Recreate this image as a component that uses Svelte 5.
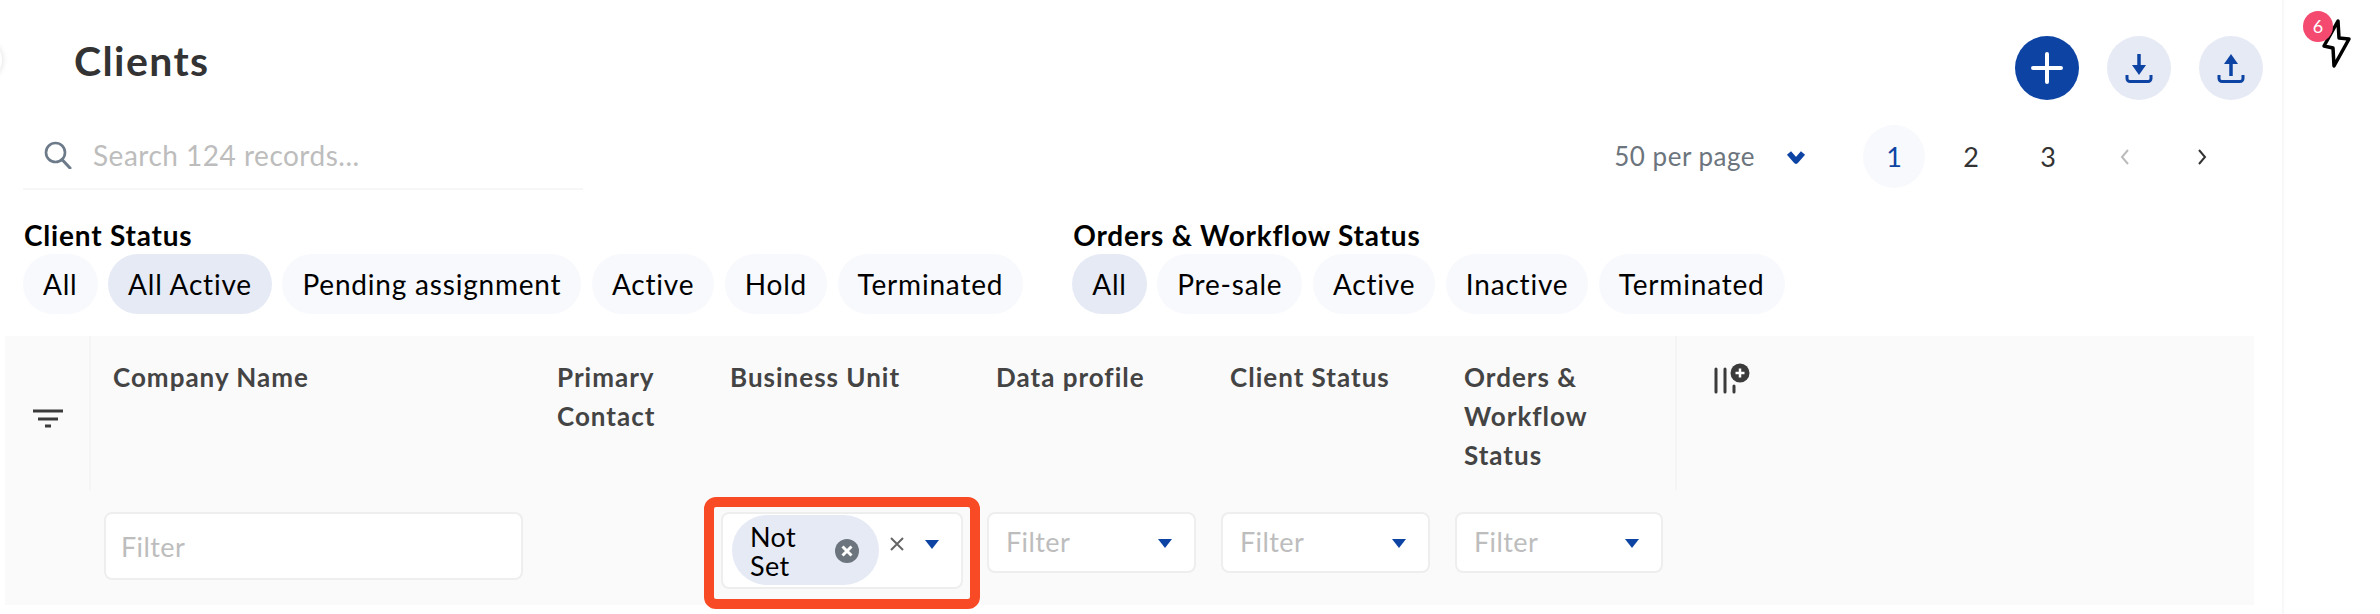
<script>
  const clientStatus = [
    { label: "All" },
    { label: "All Active", active: true },
    { label: "Pending assignment" },
    { label: "Active" },
    { label: "Hold" },
    { label: "Terminated" },
  ];
  const workflowStatus = [
    { label: "All", active: true },
    { label: "Pre-sale" },
    { label: "Active" },
    { label: "Inactive" },
    { label: "Terminated" },
  ];
  const selectFilters = [1, 2, 3];
</script>

<div class="page">
  <span class="edge-circle"></span>
  <main class="main">
    <header class="top">
      <h1>Clients</h1>
      <div class="actions">
        <button class="round primary" aria-label="Add">
          <svg width="64" height="64" viewBox="0 0 64 64">
            <path d="M32 18v28M18 32h28" stroke="#fff" stroke-width="4" stroke-linecap="round" />
          </svg>
        </button>
        <button class="round" aria-label="Download">
          <svg width="64" height="64" viewBox="0 0 64 64">
            <path d="M32 18v13" stroke="#0d44a3" stroke-width="3.5" />
            <path d="M25 29h14l-7 10z" fill="#0d44a3" />
            <path d="M20 39v3.500a3 3 0 0 0 3 3h18a3 3 0 0 0 3-3V39" fill="none" stroke="#0d44a3" stroke-width="3" />
          </svg>
        </button>
        <button class="round" aria-label="Upload">
          <svg width="64" height="64" viewBox="0 0 64 64">
            <path d="M32 26v14" stroke="#0d44a3" stroke-width="3.500" />
            <path d="M25 28h14l-7-10z" fill="#0d44a3" />
            <path d="M20 39v3.500a3 3 0 0 0 3 3h18a3 3 0 0 0 3-3V39" fill="none" stroke="#0d44a3" stroke-width="3" />
          </svg>
        </button>
      </div>
    </header>

    <div class="toolbar">
      <div class="search">
        <svg width="28" height="28" viewBox="0 0 28 28">
          <circle cx="11.500" cy="11.500" r="9.500" fill="none" stroke="#6c7a89" stroke-width="2.600" />
          <path d="M18 18.500l8 8.500" stroke="#6c7a89" stroke-width="3" stroke-linecap="round" />
        </svg>
        <span>Search 124 records...</span>
      </div>
      <div class="paging">
        <span class="per-page">50 per page</span>
        <svg class="per-chevron" width="22" height="16" viewBox="0 0 22 16">
          <path d="M4 4l7 8 7-8" fill="none" stroke="#0d44a3" stroke-width="5.500" stroke-linejoin="round" />
        </svg>
        <div class="pages">
          <span class="page-no current">1</span>
          <span class="page-no">2</span>
          <span class="page-no">3</span>
          <span class="page-no">
            <svg width="12" height="20" viewBox="0 0 12 20"><path d="M9 3L3 10l6 7" fill="none" stroke="#bbb" stroke-width="2" /></svg>
          </span>
          <span class="page-no">
            <svg width="12" height="20" viewBox="0 0 12 20"><path d="M3 3l6 7-6 7" fill="none" stroke="#333" stroke-width="2" /></svg>
          </span>
        </div>
      </div>
    </div>

    <div class="status-row">
      <section>
        <h2>Client Status</h2>
        <div class="pills">
          {#each clientStatus as s}
            <span class="pill" class:active={s.active}>{s.label}</span>
          {/each}
        </div>
      </section>
      <section>
        <h2>Orders &amp; Workflow Status</h2>
        <div class="pills">
          {#each workflowStatus as s}
            <span class="pill" class:active={s.active}>{s.label}</span>
          {/each}
        </div>
      </section>
    </div>

    <div class="table">
      <div class="th icon-cell">
        <svg width="32" height="20" viewBox="0 0 32 20">
          <path d="M1 2h30M6 10h20M13 17h6" stroke="#3b3b3b" stroke-width="3" />
        </svg>
      </div>
      <div class="th">Company Name</div>
      <div class="th">Primary Contact</div>
      <div class="th">Business Unit</div>
      <div class="th">Data profile</div>
      <div class="th">Client Status</div>
      <div class="th">Orders &amp; Workflow Status</div>
      <div class="th col-add">
        <svg width="40" height="32" viewBox="0 0 40 32">
          <path d="M4 7v23M13 7v23M22 24v6" stroke="#3b3b3b" stroke-width="3" stroke-linecap="round" />
          <circle cx="28" cy="11" r="9.500" fill="#3b3b3b" />
          <path d="M28 6.500v9M23.500 11h9" stroke="#fff" stroke-width="2.500" />
        </svg>
      </div>

      <div class="td"></div>
      <div class="td"><div class="input">Filter</div></div>
      <div class="td"></div>
      <div class="td">
        <div class="outline">
          <div class="select multi">
            <span class="chip">
              <span class="chip-text">Not Set</span>
              <svg width="24" height="24" viewBox="0 0 24 24">
                <circle cx="12" cy="12" r="12" fill="#6c757d" />
                <path d="M7.500 7.500l9 9M16.500 7.500l-9 9" stroke="#fff" stroke-width="3" />
              </svg>
            </span>
            <svg class="clear" width="16" height="16" viewBox="0 0 16 16">
              <path d="M2 2l12 12M14 2L2 14" stroke="#666" stroke-width="2" />
            </svg>
            <svg class="caret" width="14" height="9" viewBox="0 0 14 9"><path d="M0 0h14L7 9z" fill="#0d44a3" /></svg>
          </div>
        </div>
      </div>
      {#each selectFilters as f (f)}
        <div class="td">
          <div class="select">
            <span class="ph">Filter</span>
            <svg class="caret" width="14" height="9" viewBox="0 0 14 9"><path d="M0 0h14L7 9z" fill="#0d44a3" /></svg>
          </div>
        </div>
      {/each}
      <div class="td"></div>
    </div>
  </main>

  <aside class="rail">
    <span class="badge">6</span>
    <svg class="bolt" width="32" height="52" viewBox="0 0 32 52">
      <path d="M17 3l1 17 10 1-15 27-1-18-9-2z" fill="#fff" stroke="#000" stroke-width="3.500" stroke-linejoin="round" />
    </svg>
  </aside>
</div>

<style>
  :global(body) {
    background: #fff;
    font-family: Lato, "Open Sans", sans-serif;
    color: #000;
  }

  .page {
    position: relative;
    display: flex;
    width: 2380px;
    height: 614px;
    overflow: hidden;
  }

  .edge-circle {
    position: absolute;
    left: -38px;
    top: 40px;
    width: 40px;
    height: 40px;
    border-radius: 50%;
    background: #fff;
    box-shadow: 0 0 6px rgba(0, 0, 0, 0.14);
  }

  .main {
    box-sizing: border-box;
    width: 2282px;
    padding: 36px 19px 0 5px;
  }

  .top {
    display: flex;
    justify-content: space-between;
    height: 64px;
  }

  h1 {
    margin: 0 0 0 69px;
    font-size: 41px;
    line-height: 50px;
    font-weight: 700;
    letter-spacing: 1.4px;
    color: #333;
  }

  .actions {
    display: flex;
    gap: 28px;
  }

  .round {
    width: 64px;
    height: 64px;
    padding: 0;
    border: 0;
    border-radius: 50%;
    background: #e6eaf5;
  }

  .round svg {
    display: block;
  }

  .primary {
    background: #0d44a3;
  }

  .toolbar {
    display: flex;
    justify-content: space-between;
    margin: 25px 0 0 18px;
    height: 65px;
  }

  .search {
    box-sizing: border-box;
    display: flex;
    align-items: center;
    gap: 21px;
    width: 560px;
    height: 65px;
    padding: 0 0 4px 21px;
    border-bottom: 2px solid #f7f7f7;
    font-size: 28px;
    letter-spacing: 0.5px;
    color: #bdbdbd;
  }

  .paging {
    display: flex;
    align-items: flex-start;
    padding-right: 30px;
  }

  .per-page {
    margin-right: 30px;
    font-size: 26px;
    line-height: 63px;
    letter-spacing: 0.5px;
    color: #6c757d;
  }

  .per-chevron {
    margin: 24px 56px 0 0;
  }

  .pages {
    display: flex;
    gap: 15px;
  }

  .page-no {
    display: flex;
    align-items: center;
    justify-content: center;
    width: 62px;
    height: 63px;
    border-radius: 50%;
    font-size: 27px;
    color: #333;
  }

  .current {
    background: #f8f9fc;
    color: #0d44a3;
  }

  .status-row {
    display: flex;
    gap: 49px;
    margin: 26px 0 0 18px;
  }

  h2 {
    margin: 0 0 0 1px;
    font-size: 28px;
    line-height: 38px;
    font-weight: 700;
    letter-spacing: 0.8px;
    color: #000;
  }

  .pills {
    display: flex;
    gap: 10.500px;
  }

  .pill {
    box-sizing: border-box;
    height: 60px;
    padding: 0 20px;
    border-radius: 30px;
    background: #f8f9fc;
    font-size: 28px;
    line-height: 60px;
    letter-spacing: 0.8px;
    white-space: nowrap;
  }

  .active {
    background: #e6eaf5;
  }

  .table {
    display: grid;
    grid-template-columns: 86px 444px 173px 266px 234px 234px 233px 1fr;
    grid-template-rows: 154px 115px;
    margin: 22px 9px 0 0;
    background: #fafafa;
  }

  .th {
    box-sizing: border-box;
    padding: 22px 40px 0 22px;
    font-size: 26px;
    line-height: 39px;
    font-weight: 700;
    letter-spacing: 1px;
    color: #444;
  }

  .icon-cell {
    padding: 64px 0 0 27px;
    border-right: 2px solid #f5f5f5;
  }

  .col-add {
    padding-left: 35px;
    padding-top: 26px;
    border-left: 2px solid #f5f5f5;
  }

  .td {
    box-sizing: border-box;
    padding: 22px 12px 0 13px;
  }

  .input,
  .select {
    box-sizing: border-box;
    background: #fff;
    border: 2px solid #eee;
    border-radius: 8px;
    font-size: 27px;
    letter-spacing: 0.4px;
    color: #bdbdbd;
  }

  .input {
    height: 68px;
    line-height: 66px;
    padding-left: 15px;
  }

  .select {
    display: flex;
    align-items: flex-start;
    justify-content: space-between;
    height: 61px;
    padding: 0 22px 0 17px;
    line-height: 56px;
  }

  .caret {
    margin-top: 25px;
    flex: none;
  }

  .outline {
    box-sizing: border-box;
    width: 276px;
    height: 112px;
    margin: -15px 0 0 -17px;
    border: 10px solid #f84a25;
    border-radius: 12px;
    padding: 5px 7px 0 7px;
  }

  .multi {
    height: 77px;
    padding: 1px 24px 0 9px;
    justify-content: flex-start;
    color: #000;
  }

  .chip {
    display: flex;
    align-items: center;
    flex: none;
    box-sizing: border-box;
    width: 147px;
    height: 70px;
    padding: 2px 20px 0 18px;
    border-radius: 35px;
    background: #e6eaf5;
    justify-content: space-between;
  }

  .chip-text {
    width: 60px;
    line-height: 29px;
  }

  .clear {
    margin: 21px 0 0 10px;
    flex: none;
  }

  .multi .caret {
    margin: 25px 0 0 20px;
  }

  .rail {
    position: relative;
    width: 98px;
    border-left: 2px solid #f8f8f8;
    box-sizing: border-box;
  }

  .badge {
    position: absolute;
    left: 19px;
    top: 11px;
    z-index: 1;
    width: 30px;
    height: 31px;
    border-radius: 50%;
    background: #f44a6f;
    color: #fff;
    font-size: 18px;
    line-height: 31px;
    text-align: center;
  }

  .bolt {
    position: absolute;
    left: 37px;
    top: 18px;
  }
</style>
